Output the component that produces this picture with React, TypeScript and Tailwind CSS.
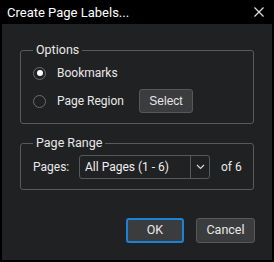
import React from "react";

export default function App() {
  return (
    <div className="w-[274px] h-[262px] bg-black flex flex-col text-[#e8e8e8] select-none" style={{ fontFamily: "Roboto, 'Liberation Sans', sans-serif" }}>
      <div className="h-[24px] flex items-center justify-between pl-[7px] pr-[10px]">
        <span className="text-[13px] text-white leading-none">Create Page Labels...</span>
        <svg width="10" height="10" viewBox="0 0 10 10" className="block">
          <path d="M0.5 0.5 L9.5 9.5 M9.5 0.5 L0.5 9.5" stroke="#e0e0e0" strokeWidth="1.2" />
        </svg>
      </div>
      <div className="mx-[2px] mb-[2px] flex-1 bg-[#202123] flex flex-col px-[18px] pt-[26px]">
        <div className="relative border border-[#5a5a5c] rounded-[3px] h-[74px] pl-[12px] pt-[15px] text-[12px]">
          <span className="absolute left-[12px] top-[-9px] px-[3px] bg-[#202123] leading-[16px] text-[12.5px]">Options</span>
          <div className="flex items-center h-[14px]">
            <span className="w-[13px] h-[13px] rounded-full border border-[#6c6c6e] flex items-center justify-center">
              <span className="w-[6px] h-[6px] rounded-full bg-white" />
            </span>
            <span className="ml-[11px] leading-none">Bookmarks</span>
          </div>
          <div className="flex items-center h-[24px] mt-[9px]">
            <span className="w-[13px] h-[13px] rounded-full border border-[#6c6c6e]" />
            <span className="ml-[11px] w-[82px] leading-none">Page Region</span>
            <button className="w-[54px] h-[24px] bg-[#3b3c3e] border border-[#58585a] rounded-[3px] text-[12px] text-[#e8e8e8] flex items-center justify-center" style={{ fontFamily: "'Liberation Sans', Arial, sans-serif" }}>Select</button>
          </div>
        </div>
        <div className="relative mt-[19px] border border-[#5a5a5c] rounded-[3px] h-[47px] pl-[12px] pt-[11px] text-[12px]">
          <span className="absolute left-[12px] top-[-9px] px-[3px] bg-[#202123] leading-[16px] text-[12.5px]">Page Range</span>
          <div className="flex items-center h-[24px]">
            <span className="w-[46px] leading-none">Pages:</span>
            <div className="w-[131px] h-[24px] border border-[#58585a] rounded-[3px] flex items-stretch">
              <span className="flex-1 flex items-center pl-[5px] text-[#f0f0f0] whitespace-nowrap">All Pages (1 - 6)</span>
              <span className="w-[19px] border-l border-[#58585a] flex items-center justify-center">
                <svg width="9" height="6" viewBox="0 0 9 6"><path d="M1 1 L4.5 4.5 L8 1" stroke="#d8d8d8" strokeWidth="1.2" fill="none" /></svg>
              </span>
            </div>
            <span className="ml-[11px] leading-none whitespace-nowrap">of 6</span>
          </div>
        </div>
        <div className="flex justify-end gap-[12px] mt-[28px] mr-[-1px]">
          <button className="w-[58px] h-[25px] bg-[#3b3c3e] border-2 border-[#1a82d8] rounded-[3px] text-[12.5px] text-[#e8e8e8] flex items-center justify-center">OK</button>
          <button className="w-[59px] h-[25px] bg-[#3b3c3e] border border-[#58585a] rounded-[3px] text-[12.5px] text-[#e8e8e8] flex items-center justify-center">Cancel</button>
        </div>
      </div>
    </div>
  );
}
